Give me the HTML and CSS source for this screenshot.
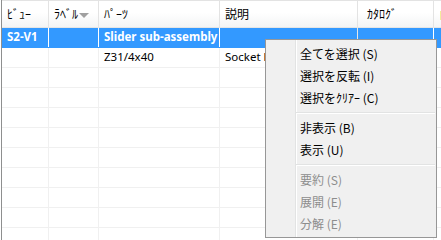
FILE: index.html
```html
<!DOCTYPE html>
<html lang="ja">
<head>
  <meta charset="UTF-8">
  <title>ﾊﾟｰﾂ一覧</title>
  <link rel="stylesheet" href="styles.css">
</head>
<body>
  <div class="grid">
    <div class="row head">
      <div class="cell c1">ﾋﾞｭｰ</div>
      <div class="cell c2">ﾗﾍﾞﾙ<span class="sort"></span></div>
      <div class="cell c3">ﾊﾟｰﾂ</div>
      <div class="cell c4">説明</div>
      <div class="cell c5">ｶﾀﾛｸﾞ</div>
      <div class="cell c6"><span class="mark"></span></div>
    </div>
    <div class="row selected">
      <div class="cell c1">S2-V1</div>
      <div class="cell c2"></div>
      <div class="cell c3">Slider sub-assembly</div>
      <div class="cell c4"></div>
      <div class="cell c5"></div>
      <div class="cell c6"></div>
    </div>
    <div class="row">
      <div class="cell c1"></div>
      <div class="cell c2"></div>
      <div class="cell c3">Z31/4x40</div>
      <div class="cell c4">Socket head</div>
      <div class="cell c5"></div>
      <div class="cell c6"></div>
    </div>
    <div class="row"><div class="cell c1"></div><div class="cell c2"></div><div class="cell c3"></div><div class="cell c4"></div><div class="cell c5"></div><div class="cell c6"></div></div>
    <div class="row"><div class="cell c1"></div><div class="cell c2"></div><div class="cell c3"></div><div class="cell c4"></div><div class="cell c5"></div><div class="cell c6"></div></div>
    <div class="row"><div class="cell c1"></div><div class="cell c2"></div><div class="cell c3"></div><div class="cell c4"></div><div class="cell c5"></div><div class="cell c6"></div></div>
    <div class="row"><div class="cell c1"></div><div class="cell c2"></div><div class="cell c3"></div><div class="cell c4"></div><div class="cell c5"></div><div class="cell c6"></div></div>
    <div class="row"><div class="cell c1"></div><div class="cell c2"></div><div class="cell c3"></div><div class="cell c4"></div><div class="cell c5"></div><div class="cell c6"></div></div>
    <div class="row"><div class="cell c1"></div><div class="cell c2"></div><div class="cell c3"></div><div class="cell c4"></div><div class="cell c5"></div><div class="cell c6"></div></div>
    <div class="row"><div class="cell c1"></div><div class="cell c2"></div><div class="cell c3"></div><div class="cell c4"></div><div class="cell c5"></div><div class="cell c6"></div></div>
    <div class="row"><div class="cell c1"></div><div class="cell c2"></div><div class="cell c3"></div><div class="cell c4"></div><div class="cell c5"></div><div class="cell c6"></div></div>
    <div class="row"><div class="cell c1"></div><div class="cell c2"></div><div class="cell c3"></div><div class="cell c4"></div><div class="cell c5"></div><div class="cell c6"></div></div>
  </div>

  <div class="menu">
    <div class="item">全てを選択 (S)</div>
    <div class="item">選択を反転 (I)</div>
    <div class="item">選択をｸﾘｱｰ (C)</div>
    <div class="sep"></div>
    <div class="item">非表示 (B)</div>
    <div class="item">表示 (U)</div>
    <div class="sep"></div>
    <div class="item disabled">要約 (S)</div>
    <div class="item disabled">展開 (E)</div>
    <div class="item disabled">分解 (E)</div>
  </div>
</body>
</html>
```

FILE: styles.css
```css
body {
  margin: 0;
  padding-left: 1px;
  width: 441px;
  height: 240px;
  overflow: hidden;
  position: relative;
  background: #fff;
  font-family: "Noto Sans", "Noto Sans CJK JP", sans-serif;
  font-size: 11.5px;
  color: #000;
}
.grid {
  border-left: 1px solid #8e8f8f;
  width: 460px;
}
.row {
  display: flex;
  height: 19px;
  border-bottom: 1px solid #f0f0f0;
}
.cell {
  box-sizing: border-box;
  height: 100%;
  padding-left: 5px;
  border-right: 1px solid #f0f0f0;
  line-height: 18px;
  white-space: nowrap;
  overflow: hidden;
  flex-shrink: 0;
}
.c1 { width: 47px; }
.c2 { width: 50px; }
.c3 { width: 121px; }
.c4 { width: 138px; }
.c5 { width: 76px; }
.c6 { width: 28px; }

.head {
  height: 26px;
  border-top: 1px solid #e3e3e3;
  border-bottom: 1px solid #e5e5e5;
  background: linear-gradient(#ffffff 45%, #f3f4f5 100%);
}
.head .cell {
  line-height: 26px;
  border-right-color: #e3e3e3;
  font-family: "Noto Sans CJK JP", sans-serif;
  font-size: 12px;
  position: relative;
}
.head .c5 { padding-left: 9px; }
.sort {
  position: absolute;
  left: 30px;
  top: 12px;
  border-left: 5px solid transparent;
  border-right: 5px solid transparent;
  border-top: 5px solid #a0a0a0;
}
.mark {
  display: inline-block;
  width: 2px;
  height: 9px;
  margin-left: 1px;
  vertical-align: middle;
  background: #f4ec9c;
}

.selected {
  border-bottom-color: #3399ff;
}
.selected .cell {
  background: #3399ff;
  color: #fff;
  font-weight: bold;
  border-right-color: #ffffff;
}
.selected .c4 { border-right-color: #e6e6e6; }

.menu {
  position: absolute;
  left: 265px;
  top: 39px;
  width: 172px;
  height: 199px;
  box-sizing: border-box;
  padding: 3px 0 2px 0;
  border: 1px solid #979797;
  background: #f0f0f0 linear-gradient(90deg, transparent 29px, #e2e3e3 29px, #e2e3e3 30px, #ffffff 30px, #ffffff 31px, transparent 31px);
  font-family: "Noto Sans CJK JP", sans-serif;
  font-size: 12px;
}
.item {
  height: 22px;
  line-height: 22px;
  padding-left: 34px;
}
.item.disabled {
  color: #8d8d8d;
}
.sep {
  height: 8px;
  margin-left: 30px;
  margin-right: 1px;
  background: linear-gradient(transparent 3px, #e2e3e3 3px, #e2e3e3 4px, #ffffff 4px, #ffffff 5px, transparent 5px);
}
```
